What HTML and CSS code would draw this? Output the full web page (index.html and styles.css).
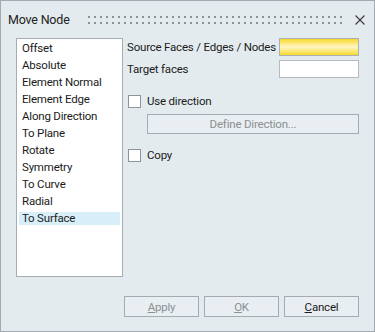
FILE: index.html
```html
<!DOCTYPE html>
<html lang="en">
<head>
    <meta charset="UTF-8">
    <title>Move Node</title>
    <link rel="stylesheet" href="styles.css">
</head>
<body>
    <div class="dialog">
        <div class="title-bar">
            <span class="title">Move Node</span>
            <svg class="grip" height="8">
                <defs>
                    <pattern id="dots" width="6" height="6" patternUnits="userSpaceOnUse">
                        <rect x="0" y="0" width="2" height="2" fill="#8c9195"/>
                    </pattern>
                </defs>
                <rect width="100%" height="8" fill="url(#dots)"/>
            </svg>
            <span class="close">
                <svg width="10" height="10" viewBox="0 0 10 10">
                    <path d="M0.5 0.5 L9.5 9.5 M9.5 0.5 L0.5 9.5" stroke="#3a3a3a" stroke-width="1.1" fill="none"/>
                </svg>
            </span>
        </div>

        <div class="main">
            <ul class="mode-list">
                <li>Offset</li>
                <li>Absolute</li>
                <li>Element Normal</li>
                <li>Element Edge</li>
                <li>Along Direction</li>
                <li>To Plane</li>
                <li>Rotate</li>
                <li>Symmetry</li>
                <li>To Curve</li>
                <li>Radial</li>
                <li class="selected">To Surface</li>
            </ul>

            <div class="options">
                <div class="field-row">
                    <span class="label">Source Faces / Edges / Nodes</span>
                    <span class="picker active"></span>
                </div>
                <div class="field-row">
                    <span class="label">Target faces</span>
                    <span class="picker"></span>
                </div>

                <label class="check-row first">
                    <span class="checkbox"></span>
                    <span>Use direction</span>
                </label>
                <button class="btn wide" disabled>Define Direction...</button>

                <label class="check-row">
                    <span class="checkbox"></span>
                    <span>Copy</span>
                </label>
            </div>
        </div>

        <div class="footer">
            <button class="btn" disabled><u>A</u>pply</button>
            <button class="btn" disabled><u>O</u>K</button>
            <button class="btn"><u>C</u>ancel</button>
        </div>
    </div>
</body>
</html>
```

FILE: styles.css
```css
body {
    margin: 0;
    font-family: Roboto, "Liberation Sans", sans-serif;
    font-size: 11.5px;
    letter-spacing: -0.2px;
    color: #1b1b1b;
}
.dialog {
    box-sizing: border-box;
    width: 375px;
    height: 332px;
    border: 1px solid #a4abb0;
    background-color: #e4ebef;
    display: flex;
    flex-direction: column;
}
.title-bar {
    height: 37px;
    display: flex;
    align-items: center;
    padding: 0 9px 0 7px;
}
.title {
    font-size: 12.5px;
    color: #222;
    white-space: nowrap;
}
.grip {
    flex: 1 1 0;
    min-width: 0;
    margin: 0 12px 0 18px;
}
.close {
    display: flex;
    width: 10px;
    height: 10px;
}
.main {
    display: flex;
    padding-left: 15px;
    flex-grow: 1;
}
.mode-list {
    list-style: none;
    margin: 0;
    padding: 3px 2px;
    width: 101px;
    height: 231px;
    background-color: white;
    border: 1px solid #a6adb2;
}
.mode-list li {
    height: 13px;
    line-height: 13px;
    margin-bottom: 4px;
    padding-left: 3px;
}
.mode-list li.selected {
    background-color: #d8effa;
}
.options {
    margin-left: 4px;
    width: 232px;
    display: flex;
    flex-direction: column;
}
.field-row {
    display: flex;
    align-items: center;
    justify-content: space-between;
    height: 18px;
    margin-bottom: 4px;
    white-space: nowrap;
}
.picker {
    box-sizing: border-box;
    flex-shrink: 0;
    width: 80px;
    height: 18px;
    border: 1px solid #b4babe;
    background-color: white;
}
.picker.active {
    border-color: #aab0b4;
    background-image: linear-gradient(#f9d92c, #fff6c4 50%, #f9d92c);
}
.check-row {
    display: flex;
    align-items: center;
    gap: 6px;
    height: 14px;
    padding-left: 1px;
}
.check-row.first {
    margin-top: 12px;
}
.checkbox {
    box-sizing: border-box;
    width: 13px;
    height: 13px;
    border: 1px solid #8e9499;
    background-color: white;
}
.btn {
    box-sizing: border-box;
    width: 75px;
    height: 21px;
    font-family: inherit;
    font-size: 11.5px;
    letter-spacing: -0.2px;
    color: #1b1b1b;
    background-color: #e8eef1;
    border: 1px solid #a5acb1;
    padding: 0;
}
.btn:disabled {
    color: #8b9093;
}
.btn.wide {
    width: 212px;
    height: 20px;
    margin: 6px 0 14px 20px;
}
.footer {
    display: flex;
    justify-content: flex-end;
    gap: 5px;
    padding: 0 15px 14px 0;
}
```
